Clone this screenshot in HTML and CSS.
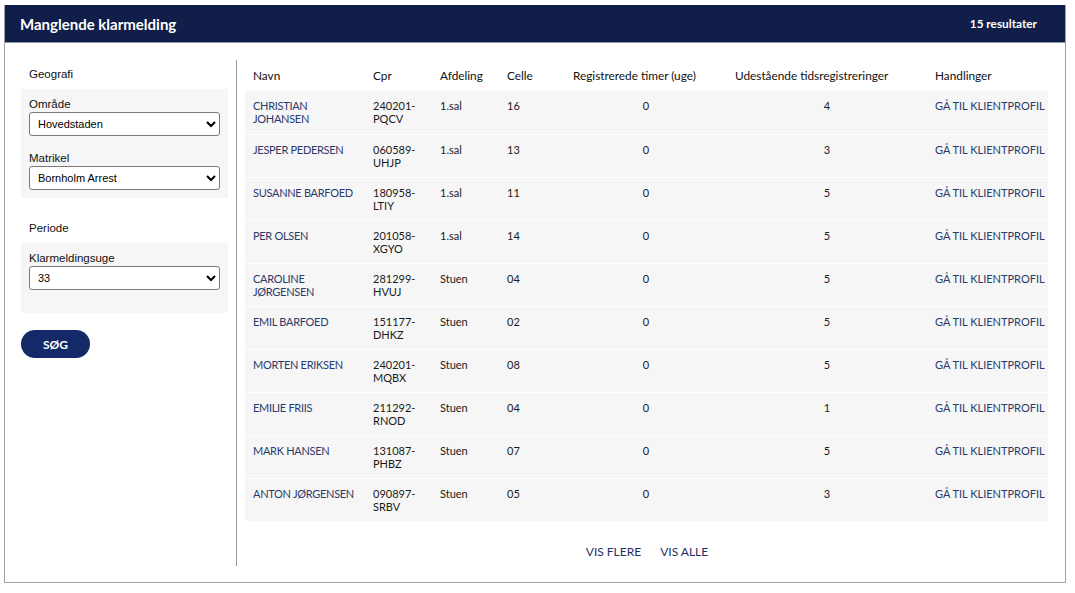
FILE: index.html
```html
<!DOCTYPE html>
<html lang="da">
<head>
<meta charset="utf-8">
<title>Manglende klarmelding</title>
<link rel="stylesheet" href="styles.css">
</head>
<body>
<div class="card">
  <header class="topbar">
    <h1 class="title">Manglende klarmelding</h1>
    <span class="count">15 resultater</span>
  </header>
  <div class="main">
    <aside class="sidebar">
      <h2 class="group-title">Geografi</h2>
      <div class="filter-box">
        <label class="field-label" for="omr">Område</label>
        <select id="omr" class="select"><option>Hovedstaden</option></select>
        <label class="field-label gap" for="mat">Matrikel</label>
        <select id="mat" class="select"><option>Bornholm Arrest</option></select>
      </div>
      <h2 class="group-title spaced">Periode</h2>
      <div class="filter-box tall">
        <label class="field-label" for="uge">Klarmeldingsuge</label>
        <select id="uge" class="select"><option>33</option></select>
      </div>
      <button class="search-btn" type="button">SØG</button>
    </aside>
    <section class="results">
      <table class="grid">
        <colgroup>
          <col class="c-navn"><col class="c-cpr"><col class="c-afd"><col class="c-celle"><col class="c-reg"><col class="c-udest"><col class="c-hand">
        </colgroup>
        <thead>
          <tr><th>Navn</th><th>Cpr</th><th>Afdeling</th><th>Celle</th><th>Registrerede timer (uge)</th><th>Udestående tidsregistreringer</th><th>Handlinger</th></tr>
        </thead>
        <tbody>
          <tr><td class="link">CHRISTIAN JOHANSEN</td><td>240201-PQCV</td><td>1.sal</td><td>16</td><td class="num">0</td><td class="num">4</td><td class="link action">GÅ TIL KLIENTPROFIL</td></tr>
          <tr><td class="link">JESPER PEDERSEN</td><td>060589-UHJP</td><td>1.sal</td><td>13</td><td class="num">0</td><td class="num">3</td><td class="link action">GÅ TIL KLIENTPROFIL</td></tr>
          <tr><td class="link">SUSANNE BARFOED</td><td>180958-LTIY</td><td>1.sal</td><td>11</td><td class="num">0</td><td class="num">5</td><td class="link action">GÅ TIL KLIENTPROFIL</td></tr>
          <tr><td class="link">PER OLSEN</td><td>201058-XGYO</td><td>1.sal</td><td>14</td><td class="num">0</td><td class="num">5</td><td class="link action">GÅ TIL KLIENTPROFIL</td></tr>
          <tr><td class="link">CAROLINE JØRGENSEN</td><td>281299-HVUJ</td><td>Stuen</td><td>04</td><td class="num">0</td><td class="num">5</td><td class="link action">GÅ TIL KLIENTPROFIL</td></tr>
          <tr><td class="link">EMIL BARFOED</td><td>151177-DHKZ</td><td>Stuen</td><td>02</td><td class="num">0</td><td class="num">5</td><td class="link action">GÅ TIL KLIENTPROFIL</td></tr>
          <tr><td class="link">MORTEN ERIKSEN</td><td>240201-MQBX</td><td>Stuen</td><td>08</td><td class="num">0</td><td class="num">5</td><td class="link action">GÅ TIL KLIENTPROFIL</td></tr>
          <tr><td class="link">EMILIE FRIIS</td><td>211292-RNOD</td><td>Stuen</td><td>04</td><td class="num">0</td><td class="num">1</td><td class="link action">GÅ TIL KLIENTPROFIL</td></tr>
          <tr><td class="link">MARK HANSEN</td><td>131087-PHBZ</td><td>Stuen</td><td>07</td><td class="num">0</td><td class="num">5</td><td class="link action">GÅ TIL KLIENTPROFIL</td></tr>
          <tr><td class="link">ANTON JØRGENSEN</td><td>090897-SRBV</td><td>Stuen</td><td>05</td><td class="num">0</td><td class="num">3</td><td class="link action">GÅ TIL KLIENTPROFIL</td></tr>
        </tbody>
      </table>
      <div class="more">
        <a class="more-link" href="#">VIS FLERE</a>
        <a class="more-link" href="#">VIS ALLE</a>
      </div>
    </section>
  </div>
</div>
</body>
</html>
```

FILE: styles.css
```css
* { box-sizing: border-box; }
html, body { margin: 0; padding: 0; background: #fff; }
body { padding: 5px 10px 0 4px; font-family: "Lato", "Liberation Sans", sans-serif; color: #1a1a1a; }

.card {
  width: 1062px;
  border: 1px solid #a3a3a3;
  border-top: none;
  background: #fff;
}
.topbar {
  height: 38px;
  background: #101e49;
  display: flex;
  align-items: center;
  justify-content: space-between;
  padding: 0 28px 0 15px;
  border-bottom: 1px solid #8f95a8;
}
.title {
  margin: 0;
  font-size: 15px;
  font-weight: 700;
  color: #fff;
  letter-spacing: 0;
}
.count {
  font-size: 11.8px;
  font-weight: 700;
  color: #fff;
}

.main {
  display: flex;
  padding: 17px 16px 16px 16px;
}
.sidebar {
  width: 207px;
  flex: none;
  margin-right: 8px;
}
.group-title {
  margin: 0;
  height: 29px;
  line-height: 29px;
  padding-left: 8px;
  font-family: "Liberation Sans", Arial, sans-serif;
  font-size: 11.5px;
  font-weight: 400;
  color: #111;
}
.group-title.spaced { margin-top: 16px; }
.filter-box {
  background: #f6f6f6;
  padding: 7px 8px 8px 8px;
  display: flex;
  flex-direction: column;
}
.filter-box.tall { padding-bottom: 23px; }
.field-label {
  display: block;
  height: 16px;
  line-height: 16px;
  font-family: "Liberation Sans", Arial, sans-serif;
  font-size: 11.5px;
  color: #111;
}
.field-label.gap { margin-top: 14px; }
.select {
  width: 191px;
  height: 24px;
  border: 1px solid #7a7a7a;
  border-radius: 3px;
  background: #fff;
  font-family: "Liberation Sans", Arial, sans-serif;
  font-size: 11px;
  color: #000;
  padding: 0 4px;
  margin: 0;
}
.search-btn {
  margin-top: 17px;
  width: 69px;
  height: 28px;
  border: none;
  border-radius: 14px;
  background: #142a68;
  color: #fff;
  font-family: "Lato", "Liberation Sans", sans-serif;
  font-weight: 700;
  font-size: 12px;
  cursor: pointer;
}

.results {
  flex: 1;
  border-left: 1px solid #9a9a9a;
  padding-left: 8px;
}
.grid {
  width: 803px;
  border-collapse: collapse;
  table-layout: fixed;
  font-size: 11px;
}
.c-navn { width: 120px; }
.c-cpr { width: 67px; }
.c-afd { width: 67px; }
.c-celle { width: 66px; }
.c-reg { width: 162px; }
.c-udest { width: 200px; }
.c-hand { width: 121px; }
.grid th {
  height: 31px;
  padding: 0 0 0 8px;
  text-align: left;
  font-size: 11.8px;
  font-weight: 400;
  color: #111;
  vertical-align: middle;
  white-space: nowrap;
}
.grid td {
  height: 43px;
  padding: 8px 4px 0 8px;
  vertical-align: top;
  line-height: 13px;
  background: #f6f6f6;
  border-bottom: 1px solid #fff;
  color: #1a1a1a;
}
.grid td.num { text-align: center; padding-left: 0; padding-right: 0; }
.grid td.link { color: #2b3a6b; font-size: 11px; letter-spacing: -0.3px; }
.grid td.action { white-space: nowrap; padding-right: 0; letter-spacing: 0; }

.more {
  display: flex;
  justify-content: center;
  gap: 19px;
  padding: 22px 0 6px;
}
.more-link {
  font-size: 12px;
  line-height: 16px;
  color: #1d2f66;
  text-decoration: none;
}
```
